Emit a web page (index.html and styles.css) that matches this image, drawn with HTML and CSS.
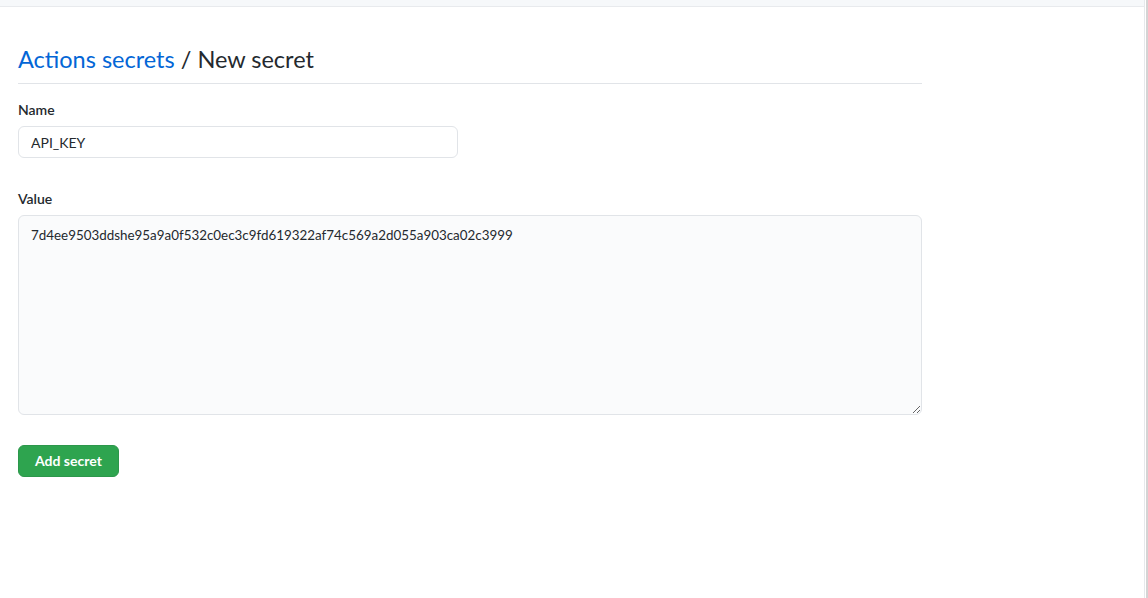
FILE: index.html
```html
<!DOCTYPE html>
<html lang="en">
<head>
<meta charset="utf-8">
<title>New secret</title>
<link rel="stylesheet" href="styles.css">
</head>
<body>
<div class="page">
  <main class="main">
    <div class="topbar"></div>
    <div class="content">
      <div class="subhead">
        <h2 class="subhead-heading"><a class="link" href="#">Actions secrets</a> / New secret</h2>
      </div>
      <form class="form">
        <div class="form-group">
          <label class="label">Name</label>
          <input class="input" type="text" value="API_KEY">
        </div>
        <div class="form-group form-group-last">
          <label class="label">Value</label>
          <textarea class="textarea">7d4ee9503ddshe95a9a0f532c0ec3c9fd619322af74c569a2d055a903ca02c3999</textarea>
        </div>
        <button class="btn" type="button">Add secret</button>
      </form>
    </div>
  </main>
  <div class="edge"></div>
</div>
</body>
</html>
```
FILE: styles.css
```css
* { box-sizing: border-box; }
html, body { margin: 0; padding: 0; height: 100%; background: #fff; }
body {
  font-family: "Lato", "Noto Sans", "Liberation Sans", sans-serif;
  font-size: 14px;
  line-height: 1.5;
  color: #24292e;
}
.page { display: flex; height: 598px; overflow: hidden; }
.main { flex: 1; display: flex; flex-direction: column; }
.edge {
  width: 4px;
  border-left: 1px solid #e6e8eb;
  border-right: 2px solid #d4d4d4;
  background: #fff;
}
.topbar {
  height: 7px;
  background: #f6f8fa;
  border-bottom: 1px solid #e8eaed;
}
.content { width: 922px; padding: 34px 0 0 18px; }
.subhead {
  border-bottom: 1px solid #e1e4e8;
  padding-bottom: 6px;
  margin-bottom: 16px;
}
.subhead-heading {
  margin: 0;
  font-size: 23.5px;
  font-weight: 400;
  line-height: 36px;
}
.link { color: #0366d6; text-decoration: none; }
.form { display: flex; flex-direction: column; align-items: flex-start; }
.form-group { display: flex; flex-direction: column; width: 100%; margin-bottom: 31px; }
.form-group-last { margin-bottom: 30px; }
.label {
  font-weight: 600;
  font-size: 14px;
  line-height: 20px;
  margin-bottom: 6px;
}
.input, .textarea {
  font-family: inherit;
  font-size: 14px;
  line-height: 20px;
  color: #24292e;
  border: 1px solid #e1e4e8;
  border-radius: 6px;
  padding: 5px 12px;
  outline: none;
}
.input { width: 440px; height: 32px; background: #fff; }
.textarea {
  width: 100%;
  height: 200px;
  background: #fafbfc;
  font-size: 13.4px;
  padding-top: 9px;
  resize: vertical;
}
.btn {
  font-family: inherit;
  font-weight: 700;
  font-size: 14px;
  line-height: 20px;
  color: #fff;
  background: #2ea44f;
  border: 1px solid #2c974b;
  border-radius: 6px;
  height: 32px;
  padding: 0 16px;
}
```
